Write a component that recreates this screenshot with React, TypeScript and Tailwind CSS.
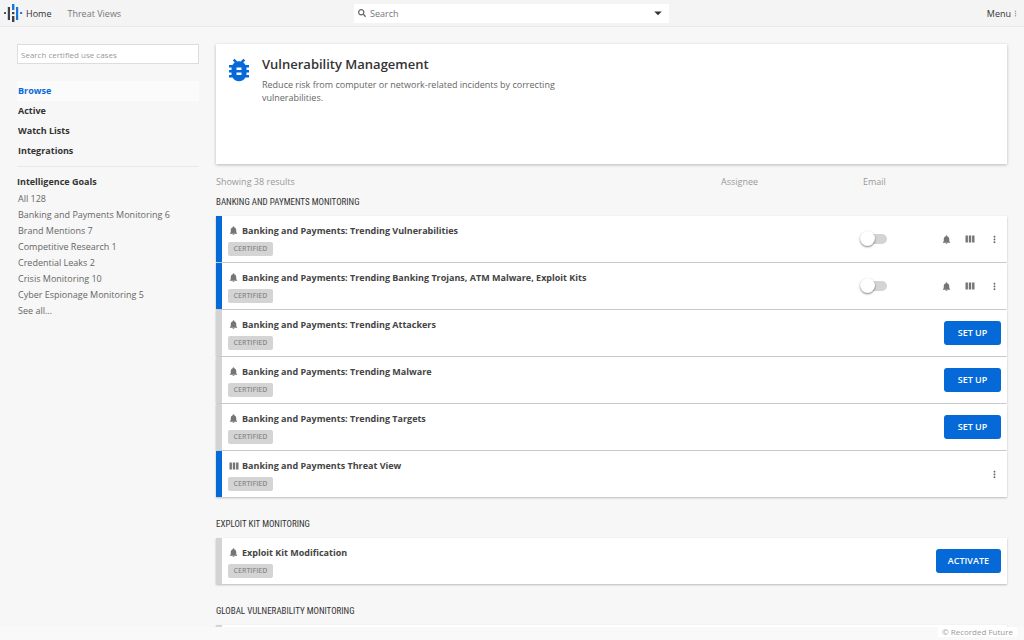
import React, { useState } from 'react';
import { MdBugReport, MdNotifications, MdMoreVert, MdArrowDropDown } from 'react-icons/md';
import { FaSearch } from 'react-icons/fa';

type RowKind = 'alert' | 'view';

interface UseCase {
  title: string;
  kind: RowKind;
  active: boolean;
  action?: string;
  email?: boolean;
}

interface UseCaseGroup {
  name: string;
  rows: UseCase[];
}

const NAV = ['Browse', 'Active', 'Watch Lists', 'Integrations'];

const GOALS = [
  'All 128',
  'Banking and Payments Monitoring 6',
  'Brand Mentions 7',
  'Competitive Research 1',
  'Credential Leaks 2',
  'Crisis Monitoring 10',
  'Cyber Espionage Monitoring 5',
  'See all...',
];

const GROUPS: UseCaseGroup[] = [
  {
    name: 'BANKING AND PAYMENTS MONITORING',
    rows: [
      { title: 'Banking and Payments: Trending Vulnerabilities', kind: 'alert', active: true, email: true },
      { title: 'Banking and Payments: Trending Banking Trojans, ATM Malware, Exploit Kits', kind: 'alert', active: true, email: true },
      { title: 'Banking and Payments: Trending Attackers', kind: 'alert', active: false, action: 'SET UP' },
      { title: 'Banking and Payments: Trending Malware', kind: 'alert', active: false, action: 'SET UP' },
      { title: 'Banking and Payments: Trending Targets', kind: 'alert', active: false, action: 'SET UP' },
      { title: 'Banking and Payments Threat View', kind: 'view', active: true },
    ],
  },
  {
    name: 'EXPLOIT KIT MONITORING',
    rows: [{ title: 'Exploit Kit Modification', kind: 'alert', active: false, action: 'ACTIVATE' }],
  },
  {
    name: 'GLOBAL VULNERABILITY MONITORING',
    rows: [],
  },
];

const Logo = () => (
  <svg viewBox="0 0 20 20" className="w-5 h-5" aria-hidden="true">
    <g fill="#3c4147">
      <rect x="1" y="9" width="2" height="2" rx="0.6" />
      <rect x="4.8" y="4" width="2.2" height="13" />
      <rect x="9" y="9" width="2.4" height="2.2" />
      <rect x="9" y="13" width="2.4" height="6" />
    </g>
    <g fill="#1a75d8">
      <rect x="9" y="1" width="2.4" height="6" />
      <rect x="13" y="4" width="2.2" height="13" />
      <rect x="17" y="9" width="2.2" height="2" rx="0.6" />
    </g>
  </svg>
);

const ColumnsIcon = () => (
  <svg viewBox="0 0 10 8" className="w-[10px] h-2" fill="currentColor" aria-hidden="true">
    <rect x="0.5" y="0.5" width="2.4" height="7" />
    <rect x="3.8" y="0.5" width="2.4" height="7" />
    <rect x="7.1" y="0.5" width="2.4" height="7" />
  </svg>
);

const EmailSwitch = ({ label }: { label: string }) => {
  const [on, setOn] = useState(false);
  return (
    <label className="relative block w-[27px] h-4 mr-[47px] cursor-pointer">
      <input
        type="checkbox"
        role="switch"
        aria-label={label}
        checked={on}
        onChange={() => setOn(!on)}
        className="peer sr-only"
      />
      <span className="absolute left-1 right-0 top-[3px] h-[10px] rounded-full bg-[#d4d4d4] peer-checked:bg-[#8bbcf0]" />
      <span className="absolute left-0 top-0 size-[15px] rounded-full bg-white shadow-[0_1px_2px_rgba(0,0,0,0.5)] peer-checked:left-3" />
    </label>
  );
};

const UseCaseRow = ({ row }: { row: UseCase }) => (
  <li
    className={`flex items-center h-[46px] px-[6px] bg-white border-l-[6px] shadow-[0_1px_2px_rgba(0,0,0,0.25)] ${
      row.active ? 'border-[#0569d7]' : 'border-[#d4d4d4]'
    }`}
  >
    <div className="flex-1">
      <div className="flex items-center h-4">
        <span className="flex justify-center w-[11px] mr-[3px] text-[#757575]">
          {row.kind === 'alert' ? <MdNotifications className="size-[11px]" /> : <ColumnsIcon />}
        </span>
        <h3 className="text-[9px] leading-4 font-bold text-[#444]">{row.title}</h3>
      </div>
      <span className="block w-[45px] h-[14px] mt-[3px] rounded-[2px] bg-[#d4d4d4] text-center text-[7px] leading-[14px] font-semibold text-[#8c8c8c]">
        CERTIFIED
      </span>
    </div>
    {row.email && <EmailSwitch label={`Email for ${row.title}`} />}
    {row.email && (
      <div className="flex items-center text-[#757575]">
        <button aria-label="Alerts" className="flex justify-center w-6"><MdNotifications className="size-[11px]" /></button>
        <button aria-label="Views" className="flex justify-center w-6"><ColumnsIcon /></button>
      </div>
    )}
    {row.action ? (
      <button className="h-6 min-w-[57px] px-3 rounded-[3px] bg-[#0569d7] text-[9px] font-semibold text-white">{row.action}</button>
    ) : (
      <button aria-label="More" className="flex justify-center w-6 -mr-[5px] text-[#666]"><MdMoreVert className="size-[11px]" /></button>
    )}
  </li>
);

const App: React.FC = () => {
  const [current, setCurrent] = useState('Browse');

  return (
    <div className="flex flex-col h-screen overflow-hidden bg-[#f7f7f7] text-[#333] font-['Open_Sans','Noto_Sans',sans-serif]">
      <header className="flex items-center h-[27px] shrink-0 pl-[3px] pr-1 bg-[#f4f4f4] border-b border-[#e9e9e9] text-[9px]">
        <nav className="flex flex-1 items-center">
          <Logo />
          <a href="#home" className="ml-[3px] pt-px">Home</a>
          <a href="#views" className="ml-4 pt-px text-[#777]">Threat Views</a>
        </nav>
        <form className="flex items-center w-[315px] h-[19px] pl-1 pr-[2px] bg-white" onSubmit={(e) => e.preventDefault()}>
          <FaSearch className="size-2 text-[#666]" />
          <input aria-label="Search" placeholder="Search" className="flex-1 ml-1 pt-px outline-none placeholder:text-[#777]" />
          <button type="button" aria-label="Search options"><MdArrowDropDown className="size-[18px]" /></button>
        </form>
        <div className="flex flex-1 justify-end">
          <button className="flex items-center pt-px">
            Menu
            <MdMoreVert className="size-[9px] text-[#999]" />
          </button>
        </div>
      </header>

      <div className="flex flex-1 min-h-0">
        <aside className="w-[199px] shrink-0 pl-[17px] pt-[17px]">
          <input
            aria-label="Search certified use cases"
            placeholder="Search certified use cases"
            className="block w-full h-5 px-[3px] bg-white border border-[#ddd] text-[8px] outline-none placeholder:text-[#999]"
          />
          <nav className="flex flex-col mt-[17px] pb-[5px] border-b border-[#e9e9e9]">
            {NAV.map((item) => (
              <a
                key={item}
                href="#browse"
                onClick={() => setCurrent(item)}
                className={`h-5 pl-px text-[9px] leading-5 font-bold ${item === current ? 'bg-[#fbfbfb] text-[#0569d7]' : ''}`}
              >
                {item}
              </a>
            ))}
          </nav>
          <h2 className="mt-[7px] text-[9px] leading-4 font-bold">Intelligence Goals</h2>
          <ul className="mt-px pl-[1px] text-[9px] leading-4 text-[#666]">
            {GOALS.map((goal) => (
              <li key={goal}><a href="#goals">{goal}</a></li>
            ))}
          </ul>
        </aside>

        <main className="flex-1 min-w-0 px-[17px] pt-[17px] overflow-hidden">
          <section className="flex h-[120px] px-2 pt-[11px] bg-white shadow-[0_1px_3px_rgba(0,0,0,0.25)]">
            <MdBugReport className="size-[30px] text-[#0569d7]" />
            <div className="ml-2">
              <h1 className="text-[13px] leading-[18px] font-semibold">Vulnerability Management</h1>
              <p className="max-w-[310px] mt-[5px] text-[9px] leading-[13px] text-[#666]">
                Reduce risk from computer or network-related incidents by correcting vulnerabilities.
              </p>
            </div>
          </section>

          <div className="flex mt-[10px] text-[9px] leading-4 text-[#999]">
            <span className="flex-1">Showing 38 results</span>
            <span className="w-[142px]">Assignee</span>
            <span className="w-[144px]">Email</span>
          </div>

          {GROUPS.map((group) => (
            <section key={group.name} className="mb-[15px]">
              <h2 className="py-1 mb-[2px] text-[9px] leading-4 font-['Roboto_Condensed','Liberation_Sans_Narrow',sans-serif]">{group.name}</h2>
              <ul className="flex flex-col gap-px">
                {group.rows.map((row) => (
                  <UseCaseRow key={row.title} row={row} />
                ))}
                {group.rows.length === 0 && (
                  <li className="h-[46px] bg-white border-l-[6px] border-[#d4d4d4] shadow-[0_1px_2px_rgba(0,0,0,0.25)]" />
                )}
              </ul>
            </section>
          ))}
        </main>
      </div>

      <footer className="flex items-start justify-end h-[13px] shrink-0 pr-[7px] bg-[#f9f9f9]">
        <small className="px-1 bg-white text-[8px] leading-[10px] text-[#999]">© Recorded Future</small>
      </footer>
    </div>
  );
};

export default App;
